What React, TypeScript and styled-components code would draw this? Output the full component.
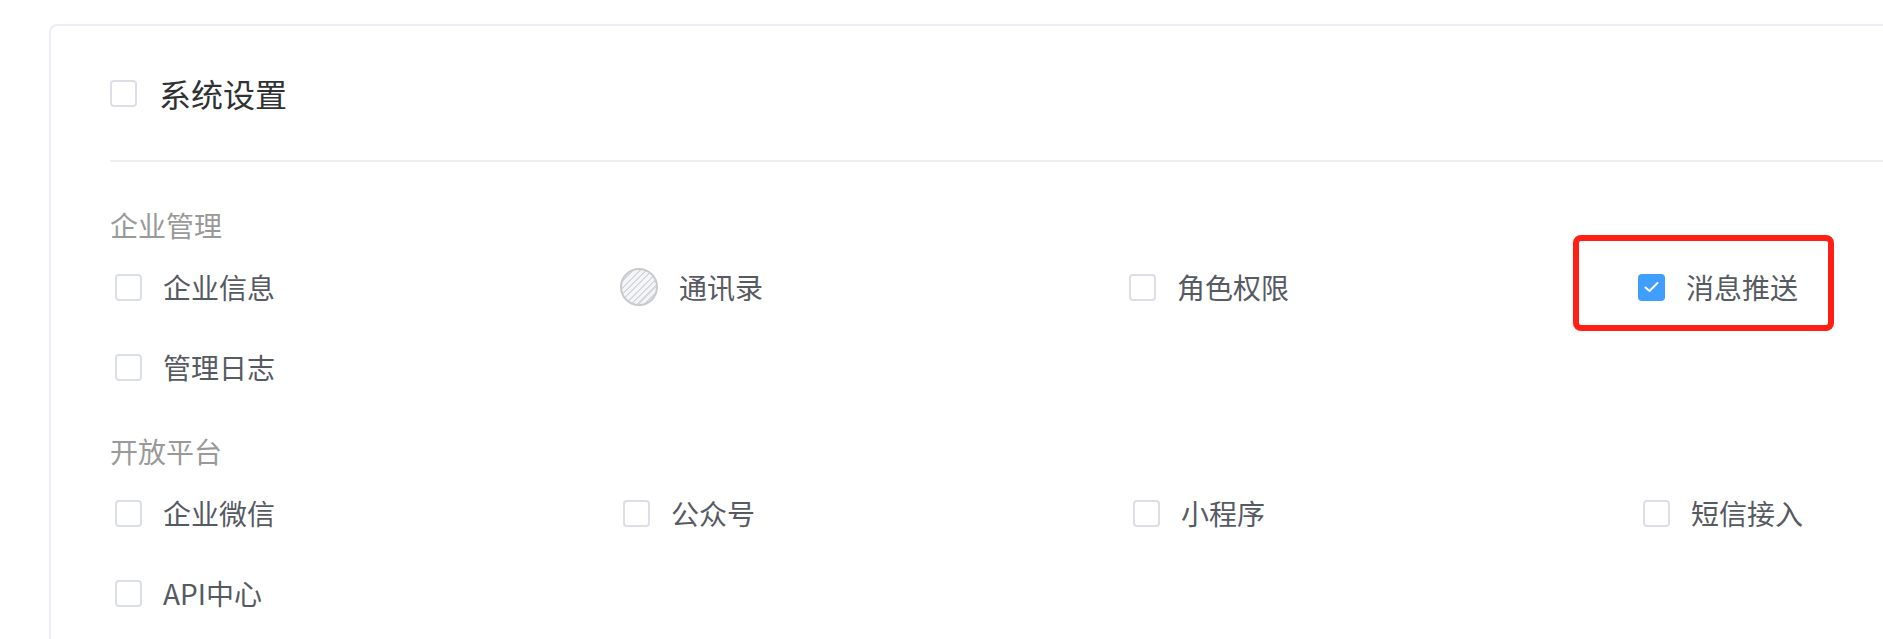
import React from "react";
import styled, { createGlobalStyle } from "styled-components";

const GlobalStyle = createGlobalStyle`
  html, body {
    margin: 0;
    padding: 0;
    overflow: hidden;
    background: #ffffff;
    font-family: "Noto Sans CJK SC", "Noto Sans", "Liberation Sans", sans-serif;
  }
  * { box-sizing: border-box; }
`;

const Page = styled.div`
  display: flex;
  flex-direction: column;
  height: 100vh;
  padding: 24px 0 0 49px;
`;

const Card = styled.div`
  flex: 1;
  min-height: 0;
  overflow: hidden;
  border: 2px solid #ebeef5;
  border-right: none;
  border-bottom: none;
  border-top-left-radius: 8px;
  background: #ffffff;
  padding: 35px 0 0 59px;
`;

const TitleRow = styled.div`
  display: flex;
  align-items: center;
  gap: 22px;
  height: 64px;
  font-size: 32px;
  color: #303133;
`;

const Divider = styled.div`
  margin-top: 35px;
  height: 2px;
  background: #eff0f3;
`;

const Section = styled.div<{ $top: number }>`
  margin-top: ${(p) => p.$top}px;
`;

const GroupLabel = styled.div`
  font-size: 28px;
  line-height: 44px;
  color: #999999;
`;

const Grid = styled.div<{ $cols: string }>`
  display: grid;
  grid-template-columns: ${(p) => p.$cols};
  grid-auto-rows: 80px;
  margin-left: 5px;
`;

const Item = styled.label`
  position: relative;
  display: flex;
  align-items: center;
  gap: 21px;
  font-size: 28px;
  color: #565a62;
  cursor: pointer;
`;

const Box = styled.span<{ $checked?: boolean }>`
  width: 27px;
  height: 27px;
  flex: none;
  border-radius: 4px;
  border: 2px solid ${(p) => (p.$checked ? "#409eff" : "#dcdfe6")};
  background: ${(p) => (p.$checked ? "#409eff" : "#ffffff")};
  display: flex;
  align-items: center;
  justify-content: center;
`;

const Hatched = styled.span`
  width: 38px;
  height: 38px;
  flex: none;
  border-radius: 50%;
  border: 2px solid #c8cacf;
  background: repeating-linear-gradient(
    -45deg,
    #f4f5f7 0px,
    #f4f5f7 3px,
    #d5d8de 3px,
    #d5d8de 4.5px
  );
`;

const Highlight = styled.span`
  position: absolute;
  left: -65px;
  top: -12px;
  width: 261px;
  height: 96px;
  border: 6px solid #ff1f14;
  border-radius: 8px;
  pointer-events: none;
`;

type Entry = { label: string; kind?: "checked" | "hatched" };

const Check = () => (
  <svg width="15" height="12" viewBox="0 0 15 12" fill="none">
    <polyline
      points="1.5,6.5 5.5,10 13.5,2"
      stroke="#ffffff"
      strokeWidth="2"
      strokeLinecap="round"
      strokeLinejoin="round"
    />
  </svg>
);

const Option: React.FC<{ entry: Entry }> = ({ entry }) => (
  <Item>
    {entry.kind === "hatched" ? (
      <Hatched />
    ) : (
      <Box $checked={entry.kind === "checked"}>
        {entry.kind === "checked" && <Check />}
      </Box>
    )}
    <span>{entry.label}</span>
    {entry.kind === "checked" && <Highlight />}
  </Item>
);

const groups: { title: string; top: number; cols: string; items: Entry[] }[] = [
  {
    title: "企业管理",
    top: 41,
    cols: "505px 509px 509px 509px",
    items: [
      { label: "企业信息" },
      { label: "通讯录", kind: "hatched" },
      { label: "角色权限" },
      { label: "消息推送", kind: "checked" },
      { label: "管理日志" },
    ],
  },
  {
    title: "开放平台",
    top: 22,
    cols: "508px 510px 510px 510px",
    items: [
      { label: "企业微信" },
      { label: "公众号" },
      { label: "小程序" },
      { label: "短信接入" },
      { label: "API中心" },
    ],
  },
];

export default function App() {
  return (
    <>
      <GlobalStyle />
      <Page>
        <Card>
          <TitleRow>
            <Box />
            <span>系统设置</span>
          </TitleRow>
          <Divider />
          {groups.map((g) => (
            <Section key={g.title} $top={g.top}>
              <GroupLabel>{g.title}</GroupLabel>
              <Grid $cols={g.cols}>
                {g.items.map((it) => (
                  <Option key={it.label} entry={it} />
                ))}
              </Grid>
            </Section>
          ))}
        </Card>
      </Page>
    </>
  );
}
